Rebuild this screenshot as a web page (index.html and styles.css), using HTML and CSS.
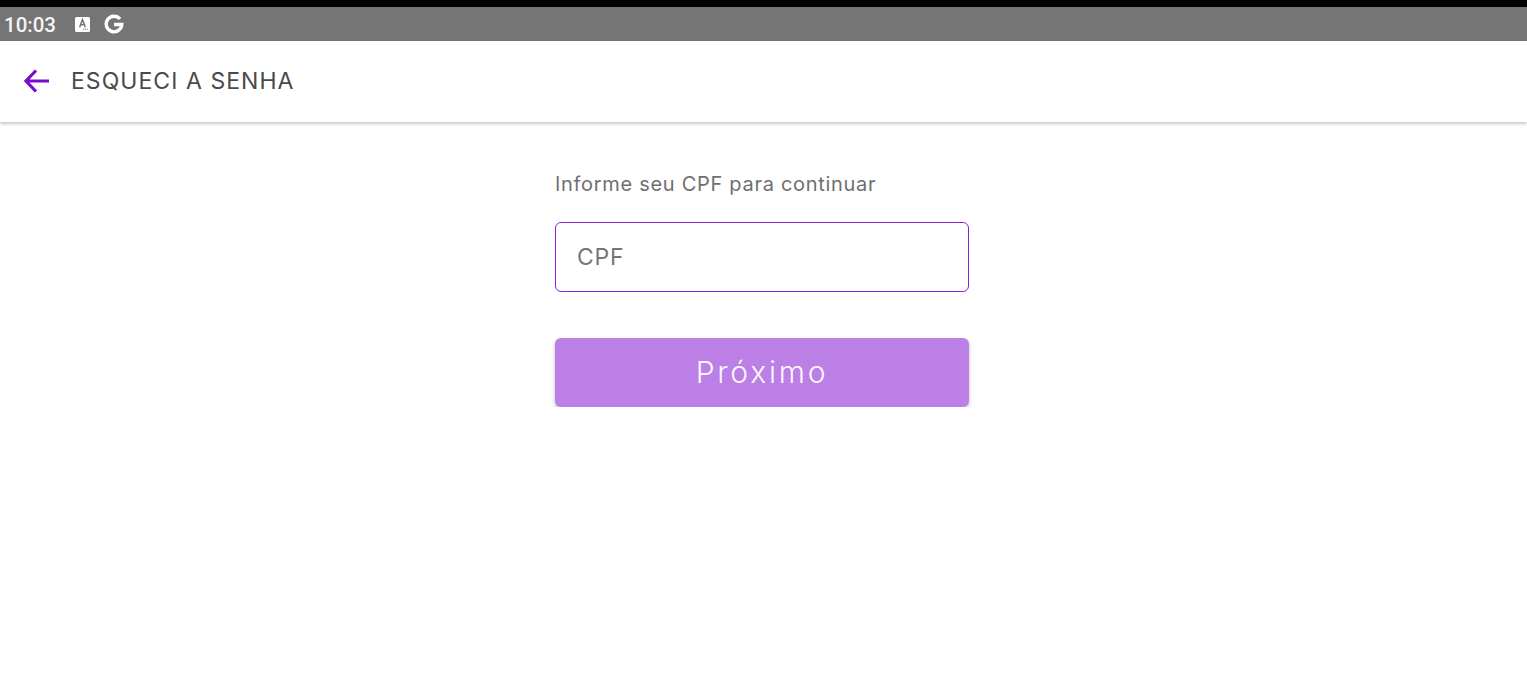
FILE: index.html
```html
<!DOCTYPE html>
<html lang="pt-BR">
<head>
  <meta charset="UTF-8">
  <title>Esqueci a senha</title>
  <link rel="stylesheet" href="styles.css">
</head>
<body>
  <div class="status-bar">
    <span class="clock">10:03</span>
    <svg class="icon-a" width="15" height="15" viewBox="0 0 14 14">
      <path fill="#fff" d="M1.5 0h11A1.500 1.500 0 0 1 14 1.500v11a1.500 1.500 0 0 1-1.500 1.500h-11A1.500 1.500 0 0 1 0 12.500v-11A1.500 1.500 0 0 1 1.500 0z"/>
      <path fill="none" stroke="#757575" stroke-width="1.400" d="M4.300 9.500 7 2.500l2.700 7M5.200 7.300h3.600"/>
      <path fill="#757575" d="M7.500 11h1v1h-1zM9.200 11h1v1h-1zM10.900 11h1v1h-1z"/>
    </svg>
    <svg class="icon-g" width="20" height="20" viewBox="0 0 20 20">
      <path fill="none" stroke="#fff" stroke-width="3.400" d="M16 5A7.800 7.800 0 1 0 17.800 10.500H10"/>
    </svg>
  </div>

  <header class="app-bar">
    <svg class="back" width="28" height="28" viewBox="0 0 28 28">
      <path fill="none" stroke="#7b0acf" stroke-width="3.200" d="M27 14H4M14 3.500 4 14l10 10.500"/>
    </svg>
    <h1>ESQUECI A SENHA</h1>
  </header>

  <main class="page">
    <form class="form">
      <p class="hint">Informe seu CPF para continuar</p>
      <div class="field">CPF</div>
      <button class="next" type="button">Próximo</button>
    </form>
  </main>
</body>
</html>
```

FILE: styles.css
```css
body {
  margin: 0;
  background: #fff;
  font-family: Inter, "Noto Sans", sans-serif;
}

.status-bar {
  height: 34px;
  border-top: 7px solid #000;
  background: #757575;
  display: flex;
  align-items: center;
  color: #fff;
}

.clock {
  font-family: Roboto, sans-serif;
  font-size: 20.500px;
  font-weight: 500;
  margin: 2px 0 0 4px;
  width: 71px;
  color: #f4f4f4;
}

.icon-g {
  margin-left: 14px;
}

.app-bar {
  height: 81px;
  display: flex;
  align-items: center;
  background: #fff;
  box-shadow: 0 2px 3px rgba(0, 0, 0, 0.22);
}

.back {
  margin-left: 22px;
  margin-bottom: 2px;
}

.app-bar h1 {
  margin: 0 0 2px 21px;
  font-size: 23px;
  font-weight: 400;
  letter-spacing: 1.050px;
  color: #4a4a4a;
}

.page {
  display: flex;
  justify-content: center;
  padding-right: 3px;
}

.form {
  width: 414px;
  padding-top: 47px;
}

.hint {
  margin: 0;
  font-size: 20px;
  line-height: 30px;
  letter-spacing: 0.700px;
  color: #6f6f6f;
}

.field {
  margin-top: 23px;
  height: 68px;
  width: 391px;
  padding: 0 0 0 21px;
  border: 1px solid #8a1fe0;
  border-radius: 6px;
  font-size: 23px;
  line-height: 68px;
  letter-spacing: 0.700px;
  color: #767676;
}

.next {
  display: block;
  width: 414px;
  height: 69px;
  margin-top: 46px;
  padding: 0 0 2px;
  border: 0;
  border-radius: 6px;
  background: #bc7fe6;
  box-shadow: 0 2px 4px rgba(0, 0, 0, 0.25);
  font-family: inherit;
  font-size: 30px;
  font-weight: 300;
  letter-spacing: 2.800px;
  color: #fbf6fe;
}
```
